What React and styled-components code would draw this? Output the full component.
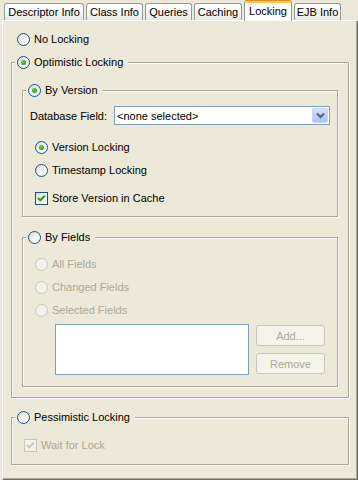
import React from 'react'
import styled, { createGlobalStyle } from 'styled-components'

const Global = createGlobalStyle`
  html, body {
    margin: 0;
    padding: 0;
    background: #ECE9D8;
  }
  body {
    font-family: "Liberation Sans", Arial, sans-serif;
    font-size: 11px;
    color: #000;
  }
  #root {
    height: 480px;
  }
`

const Window = styled.div`
  display: flex;
  flex-direction: column;
  height: 480px;
  width: 358px;
  background: #ECE9D8;
`

const TabBar = styled.div`
  display: flex;
  align-items: flex-end;
  gap: 2px;
  height: 20px;
  padding-left: 4px;
`

const Tab = styled.div`
  box-sizing: border-box;
  width: ${p => p.$w}px;
  height: ${p => (p.$active ? 21 : 17)}px;
  margin-bottom: ${p => (p.$active ? -1 : 0)}px;
  position: relative;
  z-index: ${p => (p.$active ? 2 : 0)};
  display: flex;
  align-items: center;
  justify-content: center;
  padding-bottom: ${p => (p.$active ? 2 : 0)}px;
  border: 1px solid #919B9C;
  border-bottom: none;
  border-radius: 3px 3px 0 0;
  background: ${p => (p.$active ? '#FCFCFE' : 'linear-gradient(180deg, #FFFFFF 0%, #F7F7F5 50%, #E8E7E1 100%)')};
  ${p => p.$active && `
    border-top: 3px solid #FFC83C;
    &::before {
      content: '';
      position: absolute;
      left: 0; right: 0; top: -3px;
      height: 1px;
      background: #E68B2C;
      border-radius: 2px 2px 0 0;
    }
  `}
  white-space: nowrap;
`

const Panel = styled.div`
  flex: 1;
  margin-left: 2px;
  width: 356px;
  box-sizing: border-box;
  border-top: 1px solid #fff;
  border-left: 1px solid #fff;
  border-right: 1px solid #716F64;
  border-bottom: 1px solid #716F64;
  box-shadow: inset -1px -1px 0 #ACA899;
  padding-top: 10px;
  display: flex;
  flex-direction: column;
`

const Row = styled.label`
  display: flex;
  align-items: center;
  gap: 4px;
  height: 16px;
  margin-top: ${p => p.$mt || 0}px;
  padding-left: ${p => p.$pl || 0}px;
  color: ${p => (p.$disabled ? '#ACA899' : '#000')};
  white-space: nowrap;
`

const Radio = styled.span`
  flex: none;
  box-sizing: border-box;
  width: 13px;
  height: 13px;
  border-radius: 50%;
  border: 1px solid ${p => (p.$disabled ? '#CAC8BB' : '#1C5180')};
  background: ${p => (p.$disabled ? '#F2F1EA' : 'linear-gradient(135deg, #DCDCD4 0%, #F4F4F0 55%, #FFFFFF 100%)')};
  position: relative;
  &::after {
    content: '';
    display: ${p => (p.$checked ? 'block' : 'none')};
    position: absolute;
    left: 3px;
    top: 3px;
    width: 5px;
    height: 5px;
    border-radius: 50%;
    background: radial-gradient(circle at 40% 35%, #5EDB5A 0%, #2CB02C 50%, #1E8F1E 100%);
  }
`

const Box = styled.span`
  flex: none;
  box-sizing: border-box;
  width: 13px;
  height: 13px;
  border: 1px solid ${p => (p.$disabled ? '#CAC8BB' : '#1C5180')};
  background: ${p => (p.$disabled ? '#F2F1EA' : 'linear-gradient(135deg, #DCDCD4 0%, #F4F4F0 55%, #FFFFFF 100%)')};
  display: flex;
  align-items: center;
  justify-content: center;
`

const Check = ({ disabled }) => (
  <svg width="11" height="11" viewBox="0 0 11 11">
    <path d="M2 5 L4.3 7.3 L9 2.6" fill="none" stroke={disabled ? '#CAC8BB' : '#21A121'} strokeWidth="2" />
  </svg>
)

const Group = styled.div`
  display: flex;
  flex-direction: column;
  margin: ${p => p.$mt || 0}px ${p => p.$mx}px 0;
  padding-bottom: ${p => p.$pb}px;
  border: 1px solid #ACA899;
  box-shadow: 1px 1px 0 #fff, inset 1px 1px 0 #fff;
`

const Legend = styled.label`
  align-self: flex-start;
  display: flex;
  align-items: center;
  gap: 4px;
  height: 16px;
  margin: -9px 0 0 3px;
  padding: 0 5px 0 2px;
  background: #ECE9D8;
  white-space: nowrap;
`

const FieldRow = styled.div`
  display: flex;
  align-items: center;
  gap: 7px;
  margin-top: 8px;
  padding: 0 7px 0 7px;
`

const Combo = styled.div`
  flex: 1;
  box-sizing: border-box;
  height: 19px;
  border: 1px solid #7F9DB9;
  background: #fff;
  display: flex;
  align-items: center;
  padding: 1px;
  .value {
    flex: 1;
    padding-left: 1px;
  }
`

const DropButton = styled.span`
  box-sizing: border-box;
  width: 16px;
  height: 15px;
  border: 1px solid #C3D3FD;
  border-radius: 2px;
  background: linear-gradient(180deg, #D6E1FC 0%, #BACDF7 60%, #AFC4F4 100%);
  display: flex;
  align-items: center;
  justify-content: center;
`

const ListRow = styled.div`
  display: flex;
  gap: 7px;
  margin-top: 6px;
  padding-left: 32px;
`

const ListBox = styled.div`
  box-sizing: border-box;
  width: 194px;
  height: 51px;
  border: 1px solid #7F9DB9;
  background: #fff;
`

const Buttons = styled.div`
  display: flex;
  flex-direction: column;
  gap: 7px;
  padding-top: 1px;
`

const Button = styled.button`
  box-sizing: border-box;
  width: 69px;
  height: 21px;
  padding: 0;
  border: 1px solid #C9C7BA;
  border-radius: 3px;
  background: #F5F4EA;
  color: #ACA899;
  font-family: inherit;
  font-size: 11px;
`

const RadioRow = ({ label, checked, disabled, mt, pl }) => (
  <Row $mt={mt} $pl={pl} $disabled={disabled}>
    <Radio $checked={checked} $disabled={disabled} />
    {label}
  </Row>
)

const CheckRow = ({ label, disabled, mt, pl }) => (
  <Row $mt={mt} $pl={pl} $disabled={disabled}>
    <Box $disabled={disabled}><Check disabled={disabled} /></Box>
    {label}
  </Row>
)

const GroupLegend = ({ label, checked }) => (
  <Legend>
    <Radio $checked={checked} />
    {label}
  </Legend>
)

const tabs = [
  { label: 'Descriptor Info', w: 80 },
  { label: 'Class Info', w: 57 },
  { label: 'Queries', w: 47 },
  { label: 'Caching', w: 48 },
  { label: 'Locking', w: 48, active: true },
  { label: 'EJB Info', w: 47 },
]

export default function App() {
  return (
    <Window>
      <Global />
      <TabBar>
        {tabs.map(t => (
          <Tab key={t.label} $w={t.w} $active={t.active}>{t.label}</Tab>
        ))}
      </TabBar>
      <Panel>
        <RadioRow label="No Locking" pl={14} />

        <Group $mt={15} $mx={8} $pb={10}>
          <GroupLegend label="Optimistic Locking" checked />

          <Group $mt={20} $mx={10} $pb={10}>
            <GroupLegend label="By Version" checked />
            <FieldRow>
              <span>Database Field:</span>
              <Combo>
                <span className="value">&lt;none selected&gt;</span>
                <DropButton>
                  <svg width="9" height="7" viewBox="0 0 9 7">
                    <path d="M1 1.5 L4.5 5 L8 1.5" fill="none" stroke="#4D6185" strokeWidth="2" />
                  </svg>
                </DropButton>
              </Combo>
            </FieldRow>
            <RadioRow label="Version Locking" checked mt={14} pl={12} />
            <RadioRow label="Timestamp Locking" mt={7} pl={12} />
            <CheckRow label="Store Version in Cache" mt={12} pl={12} />
          </Group>

          <Group $mt={20} $mx={10} $pb={11}>
            <GroupLegend label="By Fields" />
            <RadioRow label="All Fields" disabled mt={11} pl={12} />
            <RadioRow label="Changed Fields" disabled mt={7} pl={12} />
            <RadioRow label="Selected Fields" disabled mt={7} pl={12} />
            <ListRow>
              <ListBox />
              <Buttons>
                <Button disabled>Add...</Button>
                <Button disabled>Remove</Button>
              </Buttons>
            </ListRow>
          </Group>
        </Group>

        <Group $mt={19} $mx={8} $pb={11}>
          <GroupLegend label="Pessimistic Locking" />
          <CheckRow label="Wait for Lock" disabled mt={12} pl={12} />
        </Group>
      </Panel>
    </Window>
  )
}
